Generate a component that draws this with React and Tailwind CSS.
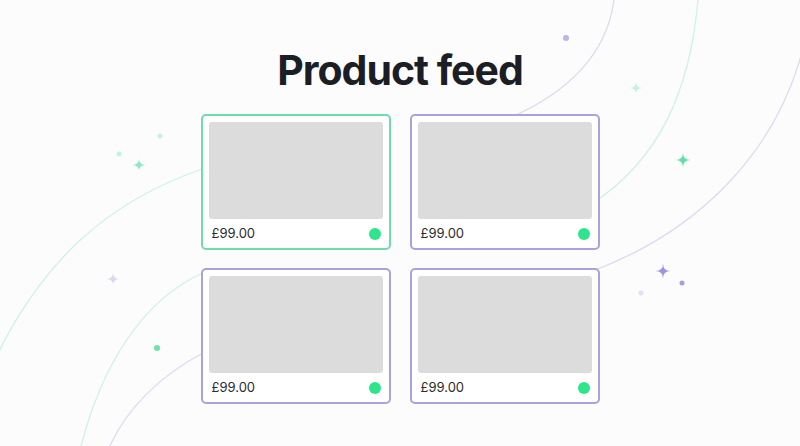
import React from "react";

// 4-point sparkle drawn with quadratic curves
function Sparkle({ x, y, r, color }) {
  const d = `M ${x} ${y - r} Q ${x} ${y} ${x + r} ${y} Q ${x} ${y} ${x} ${y + r} Q ${x} ${y} ${x - r} ${y} Q ${x} ${y} ${x} ${y - r} Z`;
  return <path d={d} fill={color} />;
}

function Backdrop() {
  const green = "#cdf3e2";
  const purple = "#ddd9f1";
  return (
    <svg
      className="absolute inset-0 w-full h-full"
      viewBox="0 0 800 446"
      fill="none"
      aria-hidden="true"
    >
      {/* sweeping lines */}
      <path d="M 614 0 C 608 45 580 90 500 122" stroke={purple} strokeWidth="1.3" />
      <path d="M 698 0 C 690 90 660 160 590 205" stroke={green} strokeWidth="1.3" />
      <path d="M 805 40 C 780 150 700 230 595 270" stroke={purple} strokeWidth="1.3" />
      <path d="M 205 168 C 110 200 40 260 -10 370" stroke={green} strokeWidth="1.3" />
      <path d="M 205 272 C 140 300 100 370 80 450" stroke={green} strokeWidth="1.3" />
      <path d="M 205 352 C 160 375 125 410 108 450" stroke={purple} strokeWidth="1.3" />

      {/* sparkles */}
      <Sparkle x={139} y={165} r={6.5} color="#8ee8c0" />
      <Sparkle x={113} y={279} r={6.5} color="#dcd7f3" />
      <Sparkle x={636} y={88} r={6.5} color="#c6f3de" />
      <Sparkle x={683} y={160} r={7.5} color="#5fe0a6" />
      <Sparkle x={663} y={271} r={7.5} color="#9f93df" />

      {/* dots */}
      <circle cx={119} cy={154} r={2.5} fill="#c7f2de" />
      <circle cx={160} cy={136} r={2.5} fill="#c7f2de" />
      <circle cx={157} cy={348} r={3} fill="#6de3ae" />
      <circle cx={566} cy={38} r={3} fill="#bdb5e3" />
      <circle cx={682} cy={283} r={2.5} fill="#a79ddf" />
      <circle cx={641} cy={293} r={2.5} fill="#e3e0f5" />
    </svg>
  );
}

function ProductCard({ active }) {
  return (
    <div
      className={`h-[136px] flex flex-col bg-white rounded-[5px] border-2 p-[6px] pb-0 ${
        active ? "border-[#6fdcae]" : "border-[#aca1da]"
      }`}
    >
      <div className="h-[97px] rounded-[3px] bg-[#dcdcdc]" />
      <div className="flex-1 flex items-center justify-between pl-[3px] pr-[2px]">
        <span className="text-[13px] text-[#2b2b2e]">£99.00</span>
        <span className="w-[12px] h-[12px] rounded-full bg-[#2ee58c]" />
      </div>
    </div>
  );
}

export default function App() {
  const products = [
    { id: 1, active: true },
    { id: 2, active: false },
    { id: 3, active: false },
    { id: 4, active: false },
  ];

  return (
    <div
      className="relative w-full h-[446px] overflow-hidden bg-[#fcfcfd]"
      style={{ fontFamily: "Inter, 'Liberation Sans', sans-serif" }}
    >
      <Backdrop />
      <div className="relative flex flex-col items-center pt-[45px]">
        <h1 className="text-[41px] leading-[50px] font-bold tracking-tight text-[#1c1e26] mb-[19px]">
          Product feed
        </h1>
        <div className="grid grid-cols-[190px_190px] gap-x-[19px] gap-y-[18px]">
          {products.map((p) => (
            <ProductCard key={p.id} active={p.active} />
          ))}
        </div>
      </div>
    </div>
  );
}
